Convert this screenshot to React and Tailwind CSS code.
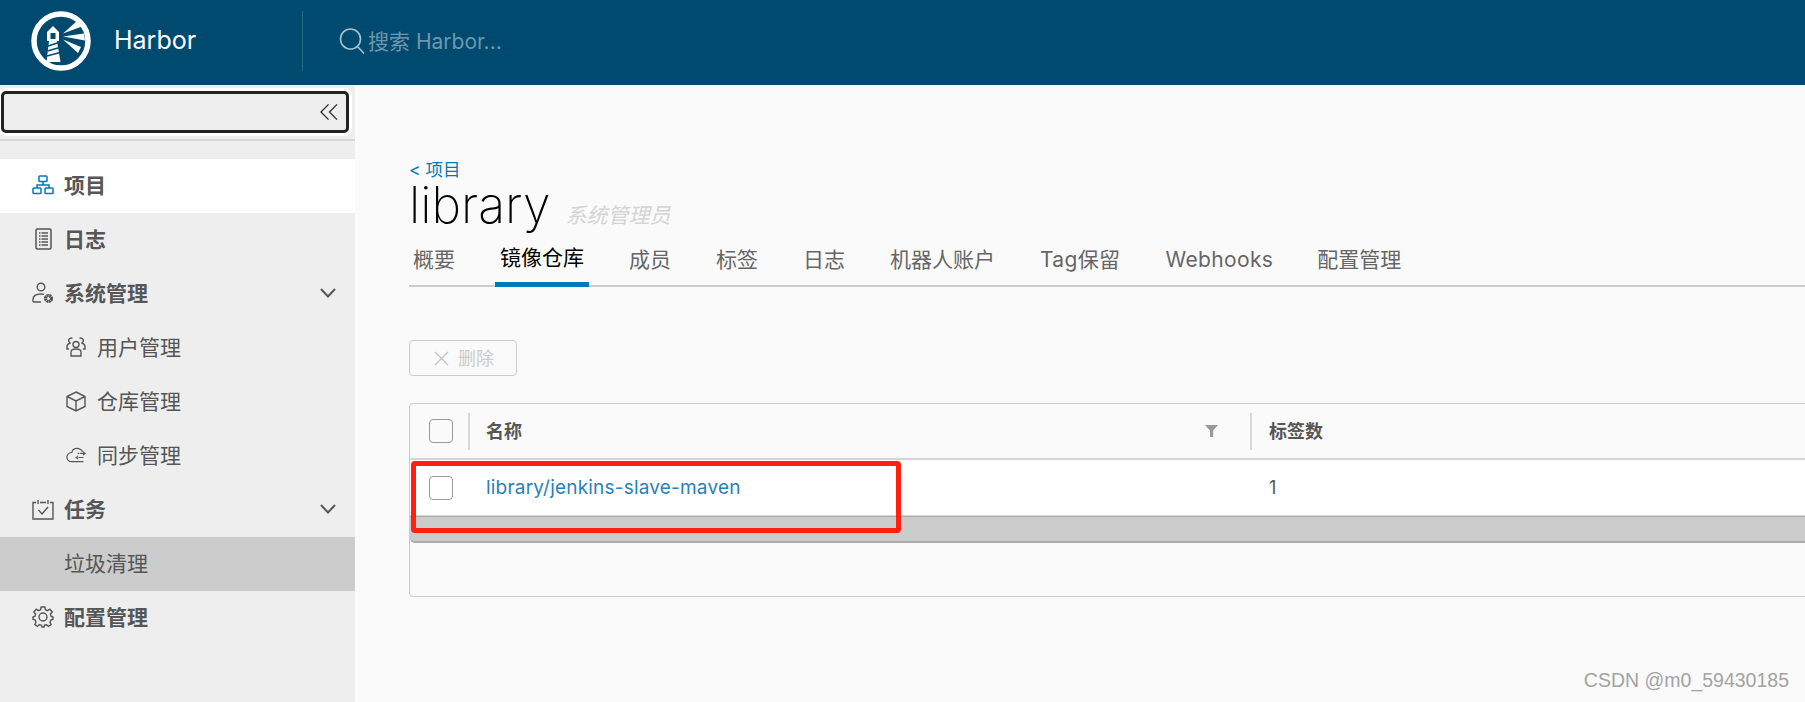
import React from 'react';

const cjk = "font-['Inter','Noto_Sans_CJK_SC',sans-serif]";

const HarborLogo = () => (
    <svg width="60" height="60" viewBox="0 0 60 60" fill="none" className="shrink-0">
        <circle cx="30" cy="30" r="27" stroke="#fff" strokeWidth="5.5" />
        <path d="M16 21 L22 15 L28 21 V30 H26 L29.5 51 H15.5 L18 30 H16 Z" fill="#fff" />
        <rect x="19.5" y="22" width="5" height="6" fill="#004a70" />
        <path d="M17 35 L28 31.5 M16.5 40 L28.5 36.5 M16 45 L29 41.5" stroke="#004a70" strokeWidth="1.4" />
        <path d="M32 22.5 L46 10 L51 15.5 Z M32 25.5 L53 22.5 L54 29.5 Z M32 28.5 L50 36 L47 42 Z" fill="#fff" />
    </svg>
);

const SearchIcon = () => (
    <svg width="26" height="28" viewBox="0 0 26 28" fill="none" stroke="#a6bfcc" strokeWidth="1.6" className="shrink-0">
        <circle cx="11.5" cy="12" r="10" />
        <path d="M18.5 19.5 L25 26.5" />
    </svg>
);

const Chevron = () => (
    <svg width="16" height="10" viewBox="0 0 16 10" fill="none" stroke="#565656" strokeWidth="2">
        <path d="M1 1 L8 8.5 L15 1" />
    </svg>
);

const stroke = { fill: 'none', stroke: '#565656', strokeWidth: 1.4 };

const icons = {
    projects: (
        <svg width="22" height="20" viewBox="0 0 22 20" fill="none" stroke="#0079b8" strokeWidth="1.5">
            <rect x="7" y="1" width="8" height="5.5" rx="0.8" />
            <rect x="1" y="13" width="8" height="5.5" rx="0.8" />
            <rect x="13" y="13" width="8" height="5.5" rx="0.8" />
            <path d="M11 6.5 V10 M5 13 V10 H17 V13" />
        </svg>
    ),
    logs: (
        <svg width="17" height="22" viewBox="0 0 17 22" {...stroke}>
            <rect x="1" y="1" width="15" height="20" rx="1.2" strokeWidth="1.5" />
            <path d="M4 5 H13 M4 8 H13 M4 11 H13 M4 14 H13 M4 17 H13" strokeDasharray="1.5 1 7 0" />
        </svg>
    ),
    admin: (
        <svg width="22" height="22" viewBox="0 0 22 22" {...stroke}>
            <circle cx="9" cy="5" r="3.8" />
            <path d="M1 20 V17.5 C1 13.5 5 12 9 12 C10 12 11 12.1 12 12.4 M1 20 H9" />
            <circle cx="16.5" cy="16.5" r="3" stroke="#565656" strokeWidth="3.2" strokeDasharray="2 0.4" />
        </svg>
    ),
    users: (
        <svg width="20" height="20" viewBox="0 0 20 20" {...stroke}>
            <circle cx="10" cy="7.5" r="3" />
            <path d="M5 19 V15 C5 12.8 7.5 12 10 12 C12.5 12 15 12.8 15 15 V19 Z" />
            <path d="M6.5 1.5 A2.5 2.5 0 1 0 4.5 6 C2.5 6.5 1 7.5 1 9.5 V12 H3 M13.5 1.5 A2.5 2.5 0 1 1 15.5 6 C17.5 6.5 19 7.5 19 9.5 V12 H17" />
        </svg>
    ),
    box: (
        <svg width="20" height="21" viewBox="0 0 20 21" {...stroke}>
            <path d="M10 1 L19 5.5 V15.5 L10 20 L1 15.5 V5.5 Z M1 5.5 L10 10 L19 5.5 M10 10 V20" />
        </svg>
    ),
    sync: (
        <svg width="24" height="18" viewBox="0 0 24 18" {...stroke}>
            <path d="M20 5 C18.5 2.5 16 1 13 1 C10 1 7.5 3 7 6 C3.5 6 1 8.5 1 11.5 C1 14.5 3.5 17 6.5 17 H21" />
            <path d="M14 7 H23 M20.5 5 L23 7 L20.5 9 M12 12 H21 M14.5 10 L12 12 L14.5 14" strokeDasharray="2 1 20 0" />
        </svg>
    ),
    tasks: (
        <svg width="22" height="21" viewBox="0 0 22 21" {...stroke}>
            <path d="M4 3.5 H1 V20 H21 V3.5 H18 M8 3.5 H14" />
            <path d="M6 1 V5 M16 1 V5" />
            <path d="M6.5 11 L10 15 L16 8" />
        </svg>
    ),
    config: (
        <svg width="22" height="22" viewBox="0 0 22 22" {...stroke}>
            <circle cx="11" cy="11" r="4" />
            <path d="M9.2 1 H12.8 L13.4 3.7 L15.5 4.6 L17.9 3.1 L20.3 6 L18.4 8 L19 10.2 L21 11 V13.2 L18.8 14 L18 16.2 L19.2 18.6 L16.4 20.4 L14.6 18.7 L12.5 19.2 L12 21 H10 L9.4 19.2 L7.3 18.6 L5.4 20.4 L2.8 18.5 L4 16.2 L3.1 14 L1 13.2 V11 L3 10.2 L3.6 8 L1.8 6 L4.2 3.1 L6.5 4.6 L8.6 3.7 Z" />
        </svg>
    ),
};

const NavRow = ({ icon, label, sub, active, expand }) => (
    <div className={`h-[54px] pb-[2px] flex items-center shrink-0 ${active ? 'bg-white' : ''} ${sub ? 'pl-[66px]' : 'pl-[32px]'}`}>
        <span className={`flex justify-center items-center shrink-0 ${sub ? 'w-[20px] mr-[11px]' : 'w-[22px] mr-[10px]'}`}>{icon}</span>
        <span className={`text-[21px] text-[#565656] leading-none ${sub ? 'font-normal' : 'font-bold'}`}>{label}</span>
        {expand && (
            <span className="ml-auto mr-[19px] flex items-center"><Chevron /></span>
        )}
    </div>
);

const Sidebar = () => (
    <aside className="w-[355px] shrink-0 bg-[#eeeeee] flex flex-col">
        <div className="h-[56px] border-b-2 border-[#d8d8d8] shrink-0 pt-[6px] pl-[1px]">
            <div className="w-[348px] h-[42px] rounded-[5px] border-[3px] border-[#222222] bg-[#eeeeee] shadow-[0_0_0_3px_#ffffff] flex items-center justify-end pr-[8px]">
                <svg width="18" height="18" viewBox="0 0 19 18" fill="none" stroke="#222222" strokeWidth="1.3">
                    <path d="M9 1 L1 9 L9 17 M18 1 L10 9 L18 17" />
                </svg>
            </div>
        </div>
        <div className="pt-[18px] flex flex-col">
            <NavRow icon={icons.projects} label="项目" active />
            <NavRow icon={icons.logs} label="日志" />
            <NavRow icon={icons.admin} label="系统管理" expand />
            <NavRow icon={icons.users} label="用户管理" sub />
            <NavRow icon={icons.box} label="仓库管理" sub />
            <NavRow icon={icons.sync} label="同步管理" sub />
            <NavRow icon={icons.tasks} label="任务" expand />
            <div className="h-[54px] pb-[2px] flex items-center pl-[64px] bg-[#cccccc] text-[21px] text-[#565656] leading-none">垃圾清理</div>
            <NavRow icon={icons.config} label="配置管理" />
        </div>
    </aside>
);

const tabs = ['概要', '镜像仓库', '成员', '标签', '日志', '机器人账户', 'Tag保留', 'Webhooks', '配置管理'];

const Checkbox = () => (
    <div className="w-[24px] h-[24px] rounded-[4px] border border-[#999999]" />
);

const RepoTable = () => (
    <div className="relative mt-[27px] -mr-[10px] border border-[#cccccc] rounded-[4px] h-[194px]">
        <div className="h-[56px] flex items-center border-b-2 border-[#d5d5d5]">
            <div className="w-[58px] pl-[19px] shrink-0"><Checkbox /></div>
            <div className="w-[2px] h-[37px] bg-[#d8d8d8] shrink-0" />
            <div className="w-[780px] shrink-0 flex items-center justify-between pl-[16px] pr-[32px]">
                <span className="text-[18px] font-bold text-[#565656]">名称</span>
                <svg width="13" height="12" viewBox="0 0 13 12" fill="#999999"><path d="M0 0 H13 L8.2 5.5 V12 H5 V5.5 Z" /></svg>
            </div>
            <div className="w-[2px] h-[37px] bg-[#d8d8d8] shrink-0" />
            <div className="pl-[17px] text-[18px] font-bold text-[#565656]">标签数</div>
        </div>
        <div className="h-[57px] flex items-center bg-white border-b-2 border-[#d8d8d8]">
            <div className="w-[60px] pl-[19px] shrink-0"><Checkbox /></div>
            <a className="w-[782px] shrink-0 pl-[16px] pt-[1px] text-[19px] tracking-[0.2px] text-[#2a80b9]">library/jenkins-slave-maven</a>
            <div className="pl-[17px] text-[18px] text-[#565656]">1</div>
        </div>
        <div className="h-[26px] bg-[#cbcbcb] border-b-2 border-[#a9a9a9] rounded-bl-[5px] shadow-[0_-1px_0_#a9a9a9]" />
        <div className="absolute left-[1px] top-[57px] w-[490px] h-[72px] border-[5px] border-[#ff2010] rounded-[4px]" />
    </div>
);

const Main = () => (
    <main className="relative flex-1 min-w-0 bg-[#fafafa] pl-[54px] pt-[73px] overflow-hidden">
        <div className="h-[24px] text-[17.5px] leading-[24px] text-[#0079b8]">&lt; 项目</div>
        <div className="h-[56px] flex items-center">
            <h1 className="text-[50px] mb-[10px] font-extralight text-black leading-[40px]">library</h1>
            <span className="ml-[15px] mt-[10px] text-[21px] italic text-[#d4d4d4] leading-none">系统管理员</span>
        </div>
        <div className="h-[49px] flex items-end gap-[35px] border-b-2 border-[#cccccc]">
            {tabs.map((tab, i) => (
                <div
                    key={tab}
                    className={`h-[49px] -mb-[2px] px-[5px] first:pl-[4px] last:-ml-[1px] flex items-center pb-[6px] text-[21px] leading-none whitespace-nowrap ${i === 1 ? 'border-b-[5px] border-[#0079b8] text-black pb-[1px]' : 'text-[#666666]'} ${i === 6 || i === 7 ? 'tracking-[0.35px]' : ''}`}
                >
                    {tab}
                </div>
            ))}
        </div>
        <div className="mt-[53px] w-[108px] h-[36px] border border-[#cccccc] rounded-[4px] flex items-center pl-[24px] text-[18px] text-[#cccccc]">
            <svg width="15" height="15" viewBox="0 0 15 15" fill="none" stroke="#c4c4c4" strokeWidth="1.3" className="mr-[9px]">
                <path d="M1 1 L14 14 M14 1 L1 14" />
            </svg>
            删除
        </div>
        <RepoTable />
        <div className="absolute right-[16px] top-[586px] text-[19.5px] leading-none text-[#a3a3a3] font-['Liberation_Sans',sans-serif]">CSDN @m0_59430185</div>
    </main>
);

export default function App() {
    return (
        <div className={`w-[1805px] h-[702px] overflow-hidden flex flex-col ${cjk}`}>
            <header className="h-[85px] pb-[4px] shrink-0 bg-[#004a70] flex items-center pl-[31px]">
                <HarborLogo />
                <span className="ml-[23px] w-[188px] text-[25px] text-white">Harbor</span>
                <div className="w-[1px] h-[60px] bg-[#2a6583]" />
                <div className="ml-[36px] flex items-center">
                    <SearchIcon />
                    <span className="ml-[3px] mt-[2px] text-[21px] text-[#6f97ab]">搜索 Harbor...</span>
                </div>
            </header>
            <div className="flex-1 flex min-h-0">
                <Sidebar />
                <Main />
            </div>
        </div>
    );
}
